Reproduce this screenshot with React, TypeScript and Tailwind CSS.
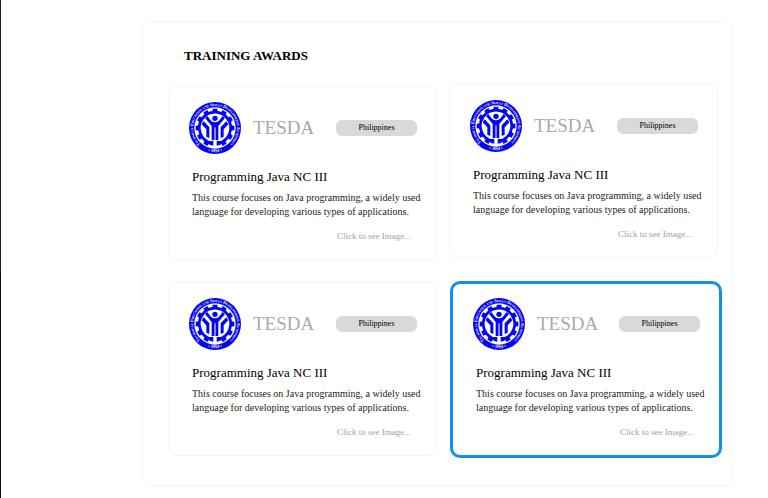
import { useId } from "react";
import { clsx } from "clsx";

const teeth = [0, 30, 60, 90, 120, 150, 210, 240, 270, 300, 330];

function Seal() {
  const id = useId();
  return (
    <svg viewBox="0 0 156 156" className="size-[52px] shrink-0" role="img" aria-label="TESDA seal">
      <defs>
        <path id={id + "top"} d="M 43 134 A 66 66 0 1 1 113 134" />
        <path id={id + "bottom"} d="M 48 144 A 73 73 0 0 0 108 144" />
      </defs>
      <circle cx="78" cy="78" r="78" fill="#0505f5" />
      <circle cx="78" cy="78" r="62" fill="#fff" />
      <text
        fill="#fff"
        fontSize="13"
        fontWeight="700"
        fontFamily="Liberation Serif, serif"
        style={{ fontVariant: "small-caps" }}
      >
        <textPath href={"#" + id + "top"} startOffset="50%" textAnchor="middle">
          Technical Education and Skills Development Authority
        </textPath>
      </text>
      <text fill="#fff" fontSize="13" fontWeight="700" fontFamily="Liberation Serif, serif">
        <textPath href={"#" + id + "bottom"} startOffset="50%" textAnchor="middle">
          • 1994 •
        </textPath>
      </text>
      <g fill="#0505f5">
        {teeth.map((a) => (
          <path key={a} d="M70 32 L71 20 H85 L86 32 Z" transform={`rotate(${a} 78 78)`} />
        ))}
        <path d="M66 123 A47 47 0 1 1 90 123" fill="none" stroke="#0505f5" strokeWidth="8" />
        <path d="M63 117 H73 V131 L61 128 Z" />
        <path d="M93 117 H83 V131 L95 128 Z" />
        <circle cx="78" cy="49" r="8" />
        <path d="M55 42 L66 56 Q78 65 90 56 L101 42 L108 48 L88 72 V114 H68 V72 L48 48 Z" />
        <path d="M44 58 L61 76 V108 L52 104 V82 L38 67 Z" />
        <path d="M112 58 L95 76 V108 L104 104 V82 L118 67 Z" />
      </g>
      <path d="M78 76 V114" stroke="#fff" strokeWidth="3" />
    </svg>
  );
}

type Award = {
  id: number;
  issuer: string;
  country: string;
  title: string;
  description: string;
  selected?: boolean;
};

const base = {
  issuer: "TESDA",
  country: "Philippines",
  title: "Programming Java NC III",
  description:
    "This course focuses on Java programming, a widely used language for developing various types of applications.",
};

const leftColumn: Award[] = [
  { id: 1, ...base },
  { id: 3, ...base },
];
const rightColumn: Award[] = [
  { id: 2, ...base },
  { id: 4, ...base, selected: true },
];

function AwardCard({ award }: { award: Award }) {
  return (
    <article
      className={clsx(
        "bg-white pb-4 pl-5",
        award.selected
          ? "-mr-1 ml-px rounded-[10px] border-3 border-[#1190ea] pt-[14px]"
          : "rounded-lg border border-[#f7f5f6] pt-[15px]",
      )}
    >
      <div className="flex items-center pr-[19px]">
        <Seal />
        <span className="ml-3 text-[19px] leading-6 text-[#aaaaaa]">{award.issuer}</span>
        <span className="ml-auto w-[81px] rounded-md bg-[#d9d9d9] text-center text-[8px] leading-4 text-black">
          {award.country}
        </span>
      </div>
      <div className="pr-2 pl-[3px]">
        <h2 className="mt-[14px] text-[13px] leading-[18px] text-black">{award.title}</h2>
        <p className="mt-[5px] text-[10px] leading-[14px] text-[#1c1c1c]">{award.description}</p>
      </div>
      <div className="mt-[10px] flex justify-end pr-[25px]">
        <a href="#image" className="text-[9px] leading-[14px] text-[#a0a0a0]">
          Click to see Image...
        </a>
      </div>
    </article>
  );
}

export default function App() {
  return (
    <div className="flex min-h-screen bg-white font-['Liberation_Serif',serif]">
      <div className="flex w-px shrink-0 flex-col">
        <div className="h-[273px] bg-[#131a4a]" />
        <div className="grow bg-[#0c0820]" />
      </div>
      <main className="mt-[21px] mr-9 mb-3 ml-[141px] grow self-start rounded-lg border border-[#f7f7f7] pr-[13px] pb-[27px] pl-[25px]">
        <h1 className="mt-6 ml-4 text-[13px] leading-5 font-bold text-black">TRAINING AWARDS</h1>
        <div className="mt-[18px] flex gap-3">
          <div className="mt-0.5 flex flex-1 flex-col gap-[22px]">
            {leftColumn.map((a) => (
              <AwardCard key={a.id} award={a} />
            ))}
          </div>
          <div className="flex flex-1 flex-col gap-[23px]">
            {rightColumn.map((a) => (
              <AwardCard key={a.id} award={a} />
            ))}
          </div>
        </div>
      </main>
    </div>
  );
}
